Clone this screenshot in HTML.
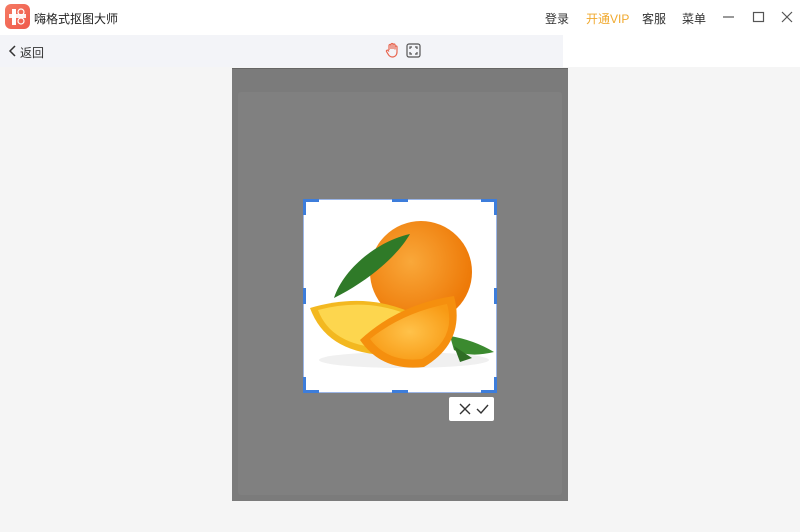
<!DOCTYPE html>
<html><head><meta charset="utf-8"><style>
*{margin:0;padding:0;box-sizing:border-box}
body{width:800px;height:532px;background:#f5f5f5;font-family:"Liberation Sans","Noto Sans CJK SC",sans-serif;position:relative;overflow:hidden;color:#333}
.top{position:absolute;left:0;top:0;width:800px;height:35px;background:#fff}
.logo{position:absolute;left:5px;top:4px;width:25px;height:25px;border-radius:6px;background:linear-gradient(135deg,#f57a63,#ef5a4c)}
.title{position:absolute;left:34px;top:10px;font-size:12px;color:#222}
.menu{position:absolute;top:10px;font-size:12px}
.tb{position:absolute;left:0;top:35px;width:563px;height:32px;background:#f3f4f8}
.tbr{position:absolute;left:563px;top:35px;width:237px;height:32px;background:#fff}
.canvas{position:absolute;left:232px;top:68px;width:336px;height:433px;background:#7b7b7b;border-top:1px solid #666}
.inner{position:absolute;left:238px;top:92px;width:324px;height:403px;background:#808080;border-radius:3px}
.img{position:absolute;left:303px;top:199px;width:194px;height:194px;background:#fff;border:1px solid #9bb5e6}
.h{position:absolute;background:#3d7ddb}
.btn{position:absolute;left:449px;top:397px;width:45px;height:24px;background:#fff;border-radius:2px;font-size:15px;color:#333;text-align:center;line-height:24px}
</style></head><body>
<div class="top"></div>
<div class="logo"><svg width="25" height="25"><rect x="7" y="5" width="4" height="16" fill="#fff"/><rect x="4" y="10" width="17" height="4" fill="#fff" opacity=".9"/><circle cx="16" cy="8" r="3" fill="none" stroke="#fff" stroke-width="1.2"/><circle cx="16" cy="17" r="3" fill="none" stroke="#fff" stroke-width="1.2"/></svg></div>
<div class="title">嗨格式抠图大师</div>
<div class="menu" style="left:545px">登录</div>
<div class="menu" style="left:586px;color:#f0a92e">开通VIP</div>
<div class="menu" style="left:642px">客服</div>
<div class="menu" style="left:682px">菜单</div>
<svg style="position:absolute;left:720px;top:8px" width="80" height="18"><line x1="3" y1="9" x2="14" y2="9" stroke="#555" stroke-width="1.2"/><rect x="33.5" y="4.5" width="10" height="9" fill="none" stroke="#555" stroke-width="1.2"/><path d="M62 4l10 10M72 4l-10 10" stroke="#555" stroke-width="1.2"/></svg>
<div class="tb"></div><div class="tbr"></div>
<svg style="position:absolute;left:8px;top:44px" width="10" height="14"><path d="M7 2L2 7l5 5" fill="none" stroke="#333" stroke-width="1.5"/></svg>
<div style="position:absolute;left:20px;top:44px;font-size:12px">返回</div>
<svg style="position:absolute;left:385px;top:42px" width="14" height="16"><path d="M4 8V3.5a1 1 0 0 1 2 0V7V2.5a1 1 0 0 1 2 0V7V3a1 1 0 0 1 2 0v4.5V5a1 1 0 0 1 2 0v5c0 3-2 5-4.5 5S4 14 3 12L1.5 9.5a1 1 0 0 1 1.7-1L4 9.5" fill="none" stroke="#e8654f" stroke-width="1.2"/></svg>
<svg style="position:absolute;left:406px;top:43px" width="15" height="15"><rect x="1" y="1" width="13" height="13" rx="2" fill="none" stroke="#555" stroke-width="1.2"/><path d="M4 6V4h2M9 4h2v2M11 9v2H9M6 11H4V9" fill="none" stroke="#555" stroke-width="1.2"/></svg>
<div class="canvas"></div><div class="inner"></div>
<div class="img"><svg width="192" height="192">
<defs><radialGradient id="o" cx=".4" cy=".4" r=".6"><stop offset="0" stop-color="#f9a83a"/><stop offset="1" stop-color="#ee7a08"/></radialGradient>
<radialGradient id="s" cx=".5" cy=".5" r=".6"><stop offset="0" stop-color="#ffc24a"/><stop offset="1" stop-color="#f89a14"/></radialGradient></defs>
<ellipse cx="100" cy="160" rx="85" ry="8" fill="#f0f0f0"/>
<circle cx="117" cy="72" r="51" fill="url(#o)"/>
<path d="M30 98C38 72 70 42 106 34C92 58 62 82 30 98Z" fill="#2f7a28"/>
<path d="M146 136Q170 140 190 152Q165 158 150 150Z" fill="#3b8a2f"/>
<path d="M150 146L168 158L156 162Z" fill="#2f6e25"/>
<path d="M6 108Q60 92 106 112L80 155Q22 152 6 108Z" fill="#f3b820"/>
<path d="M14 110Q60 98 100 113L78 148Q27 145 14 110Z" fill="#fdd64e"/>
<path d="M56 140Q95 104 150 96Q162 142 120 167Q78 172 56 140Z" fill="#f58f0e"/>
<path d="M66 139Q98 113 143 104Q153 139 118 159Q84 163 66 139Z" fill="url(#s)"/>
</svg></div>
<div class="h" style="left:303px;top:199px;width:16px;height:3px"></div>
<div class="h" style="left:303px;top:199px;width:3px;height:16px"></div>
<div class="h" style="left:481px;top:199px;width:16px;height:3px"></div>
<div class="h" style="left:494px;top:199px;width:3px;height:16px"></div>
<div class="h" style="left:303px;top:390px;width:16px;height:3px"></div>
<div class="h" style="left:303px;top:377px;width:3px;height:16px"></div>
<div class="h" style="left:481px;top:390px;width:16px;height:3px"></div>
<div class="h" style="left:494px;top:377px;width:3px;height:16px"></div>
<div class="h" style="left:392px;top:199px;width:16px;height:3px"></div>
<div class="h" style="left:392px;top:390px;width:16px;height:3px"></div>
<div class="h" style="left:303px;top:288px;width:3px;height:16px"></div>
<div class="h" style="left:494px;top:288px;width:3px;height:16px"></div>
<div class="btn"><svg width="40" height="24"><path d="M8 7l10 10M18 7L8 17" stroke="#333" stroke-width="1.4"/><path d="M25 12l4 4l7-8" fill="none" stroke="#333" stroke-width="1.4"/></svg></div>
</body></html>
